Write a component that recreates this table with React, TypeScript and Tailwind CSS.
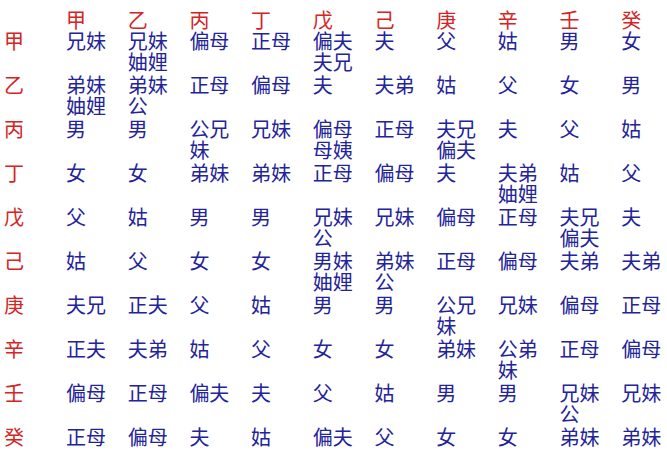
import { Fragment } from "react";

const stems = ["甲", "乙", "丙", "丁", "戊", "己", "庚", "辛", "壬", "癸"];

const rows: string[][] = [
  ["兄妹", "兄妹妯娌", "偏母", "正母", "偏夫夫兄", "夫", "父", "姑", "男", "女"],
  ["弟妹妯娌", "弟妹公", "正母", "偏母", "夫", "夫弟", "姑", "父", "女", "男"],
  ["男", "男", "公兄妹", "兄妹", "偏母母姨", "正母", "夫兄偏夫", "夫", "父", "姑"],
  ["女", "女", "弟妹", "弟妹", "正母", "偏母", "夫", "夫弟妯娌", "姑", "父"],
  ["父", "姑", "男", "男", "兄妹公", "兄妹", "偏母", "正母", "夫兄偏夫", "夫"],
  ["姑", "父", "女", "女", "男妹妯娌", "弟妹公", "正母", "偏母", "夫弟", "夫弟"],
  ["夫兄", "正夫", "父", "姑", "男", "男", "公兄妹", "兄妹", "偏母", "正母"],
  ["正夫", "夫弟", "姑", "父", "女", "女", "弟妹", "公弟妹", "正母", "偏母"],
  ["偏母", "正母", "偏夫", "夫", "父", "姑", "男", "男", "兄妹公", "兄妹"],
  ["正母", "偏母", "夫", "姑", "偏夫", "父", "女", "女", "弟妹", "弟妹"],
];

export default function App() {
  return (
    <div
      className="w-[667px] h-[455px] overflow-hidden bg-white pt-[9px] text-[20px] leading-[21px]"
      style={{ fontFamily: '"Noto Sans CJK SC", "Noto Sans CJK TC", sans-serif' }}
    >
      <div className="grid grid-cols-[62px_repeat(10,61.7px)] grid-rows-[21px_repeat(10,44px)]">
        <div />
        {stems.map((s) => (
          <div key={"h" + s} className="pl-[4px] text-[#d42424]">
            {s}
          </div>
        ))}
        {rows.map((row, i) => (
          <Fragment key={"r" + i}>
            <div className="pl-[4px] text-[#d42424]">{stems[i]}</div>
            {row.map((cell, j) => (
              <div key={j} className="pl-[4px] text-[#23239a]">
                <div className="w-[44px]">{cell}</div>
              </div>
            ))}
          </Fragment>
        ))}
      </div>
    </div>
  );
}
